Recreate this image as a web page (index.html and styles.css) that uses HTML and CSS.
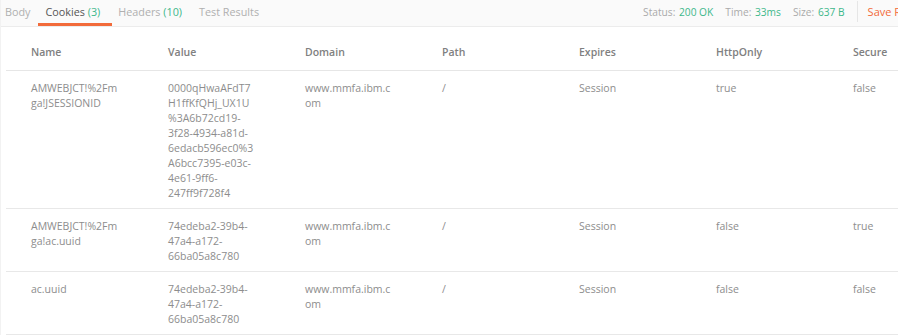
FILE: index.html
```html
<!DOCTYPE html>
<html lang="en">
<head>
  <meta charset="UTF-8">
  <title>Response Cookies</title>
  <link rel="stylesheet" href="styles.css">
</head>
<body>

  <div class="response-bar">
    <div class="tabs">
      <div class="tab first">Body</div>
      <div class="tab active">Cookies <span class="count">(3)</span></div>
      <div class="tab after-active">Headers <span class="count">(10)</span></div>
      <div class="tab">Test Results</div>
    </div>
    <div class="meta">
      <span class="meta-item">Status: <b>200 OK</b></span>
      <span class="meta-item">Time: <b>33ms</b></span>
      <span class="meta-item">Size: <b>637 B</b></span>
      <span class="save">Save Response</span>
    </div>
  </div>

  <table class="cookies">
    <thead>
      <tr>
        <th>Name</th>
        <th>Value</th>
        <th>Domain</th>
        <th>Path</th>
        <th>Expires</th>
        <th>HttpOnly</th>
        <th>Secure</th>
      </tr>
    </thead>
    <tbody>
      <tr>
        <td>AMWEBJCT!%2Fmga!JSESSIONID</td>
        <td>0000qHwaAFdT7H1ffKfQHj_UX1U%3A6b72cd19-3f28-4934-a81d-6edacb596ec0%3A6bcc7395-e03c-4e61-9ff6-247ff9f728f4</td>
        <td>www.mmfa.ibm.com</td>
        <td>/</td>
        <td>Session</td>
        <td>true</td>
        <td>false</td>
      </tr>
      <tr>
        <td>AMWEBJCT!%2Fmga!ac.uuid</td>
        <td>74edeba2-39b4-47a4-a172-66ba05a8c780</td>
        <td>www.mmfa.ibm.com</td>
        <td>/</td>
        <td>Session</td>
        <td>false</td>
        <td>true</td>
      </tr>
      <tr>
        <td>ac.uuid</td>
        <td>74edeba2-39b4-47a4-a172-66ba05a8c780</td>
        <td>www.mmfa.ibm.com</td>
        <td>/</td>
        <td>Session</td>
        <td>false</td>
        <td>false</td>
      </tr>
    </tbody>
  </table>

</body>
</html>
```

FILE: styles.css
```css
* {
  box-sizing: border-box;
}
body {
  margin: 0;
  background: #fff;
  font-family: 'Open Sans', sans-serif;
  font-size: 10.5px;
  overflow: hidden;
  border-left: 1px solid #f2f2f2;
}

.response-bar {
  display: flex;
  align-items: stretch;
  width: 955px;
  height: 27px;
  background: #fafafa;
  border-bottom: 1px solid #ececec;
}

.tabs {
  display: flex;
}

.tab {
  padding: 4px 9px 0 8px;
  color: #b0b0b0;
  font-size: 10.8px;
  line-height: 16px;
  border-bottom: 3px solid transparent;
}

.tab.first {
  padding-left: 4px;
  padding-right: 7px;
}

.tab.active {
  color: #555;
  border-bottom-color: #f26b3a;
  padding-left: 8px;
  padding-right: 12px;
}

.tab.after-active {
  padding-left: 6px;
}

.count {
  color: #3db88b;
}

.meta {
  display: flex;
  align-items: center;
  margin-left: auto;
  padding-bottom: 3px;
  font-size: 10.2px;
}

.meta-item {
  color: #aaa;
  margin-right: 12px;
}

.meta-item b {
  font-weight: normal;
  color: #3db88b;
  margin-left: 1px;
}

.save {
  color: #f26b3a;
  font-size: 11px;
  border-left: 1px solid #e6e6e6;
  padding: 3px 12px 3px 10px;
}

.cookies {
  margin-left: 5px;
  width: 959px;
  table-layout: fixed;
  border-collapse: collapse;
}

.cookies th,
.cookies td {
  padding: 0 24px 0 25px;
  text-align: left;
  vertical-align: top;
  line-height: 15px;
  overflow-wrap: break-word;
}

.cookies th {
  color: #808080;
  font-weight: 600;
  padding-top: 18px;
  padding-bottom: 10px;
  border-bottom: 1px solid #e6e6e6;
}

.cookies td {
  color: #8d8d8d;
  padding-top: 10px;
  padding-bottom: 7px;
  border-bottom: 1px solid #e8e8e8;
}
```
